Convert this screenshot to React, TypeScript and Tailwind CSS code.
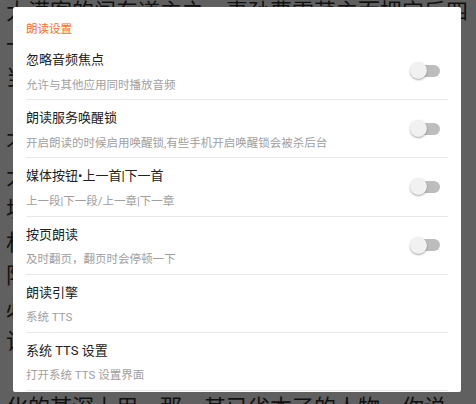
import React from "react";

const bgLines = [
  "大漠客的闯东道主之，妻孙曹雪芹主而把它后四",
  "一个人的心里总是有着许多说不出的话来才成",
  "当时他们只是默默地站在那里，谁也不开口",
  "“这件事情本来就是他一手安排下来的预设",
  "不过后来大家都知道了，那天晚上他喝了酒",
  "大家都说他是一个很好的人，只是常在外",
  "坦白地讲，这样的事情以后再也不会有回口",
  "村子里的人都说他是从远方来的，来自",
  "阳光照在院子里，树下留着长长的阴影",
  "必须要在天黑之前赶回去，不然就来不百",
  "让他们自己去想办法吧，反正总会想得到",
  "“你们到底要去哪里？”他问，没有人运",
  "化的某深上用，那，其已省本了的人物，你说",
];

function Toggle() {
  return (
    <div className="relative w-[30px] h-[18px] flex items-center shrink-0">
      <div className="absolute left-[2px] right-0 h-[12px] rounded-full bg-[#bdbdbd]" />
      <div className="absolute left-0 w-[17px] h-[17px] rounded-full bg-[#f1f1f1] shadow-[0_1px_2px_rgba(0,0,0,0.35)]" />
    </div>
  );
}

type Item = { title: string; sub: string; toggle?: boolean };

const items: Item[] = [
  { title: "忽略音频焦点", sub: "允许与其他应用同时播放音频", toggle: true },
  { title: "朗读服务唤醒锁", sub: "开启朗读的时候启用唤醒锁,有些手机开启唤醒锁会被杀后台", toggle: true },
  { title: "媒体按钮•上一首|下一首", sub: "上一段|下一段/上一章|下一章", toggle: true },
  { title: "按页朗读", sub: "及时翻页，翻页时会停顿一下", toggle: true },
  { title: "朗读引擎", sub: "系统 TTS" },
  { title: "系统 TTS 设置", sub: "打开系统 TTS 设置界面" },
];

export default function App() {
  return (
    <div
      className="relative w-[476px] h-[404px] overflow-hidden bg-[#606060]"
      style={{ fontFamily: 'Roboto, "Noto Sans CJK SC", sans-serif' }}
    >
      <div
        className="flex flex-col mt-[-7.5px] pl-[6px] text-[22px] leading-[33px] text-[#111111]"
        style={{ fontFamily: '"Noto Sans CJK SC", sans-serif' }}
      >
        {bgLines.map((l, i) => (
          <div key={i} className="whitespace-nowrap">
            {l}
          </div>
        ))}
      </div>

      <div className="absolute left-[13px] top-[7px] w-[448px] h-[385px] bg-white rounded-[2px] px-[13px] pt-[14px] flex flex-col">
        <div className="text-[11.5px] leading-[16px] text-[#fb6a30] h-[21px]">朗读设置</div>
        {items.map((it, i) => (
          <div
            key={i}
            className="h-[58.2px] shrink-0 border-b border-[#e8e8e8] flex items-center justify-between"
          >
            <div className="flex flex-col self-stretch pt-[8px]">
              <div className="text-[13px] leading-[20px] text-[#212121]">{it.title}</div>
              <div className="mt-[6.5px] text-[11.5px] leading-[16px] text-[#a0a0a0] whitespace-nowrap">
                {it.sub}
              </div>
            </div>
            {it.toggle && (
              <div className="mr-[8px]">
                <Toggle />
              </div>
            )}
          </div>
        ))}
      </div>
    </div>
  );
}
